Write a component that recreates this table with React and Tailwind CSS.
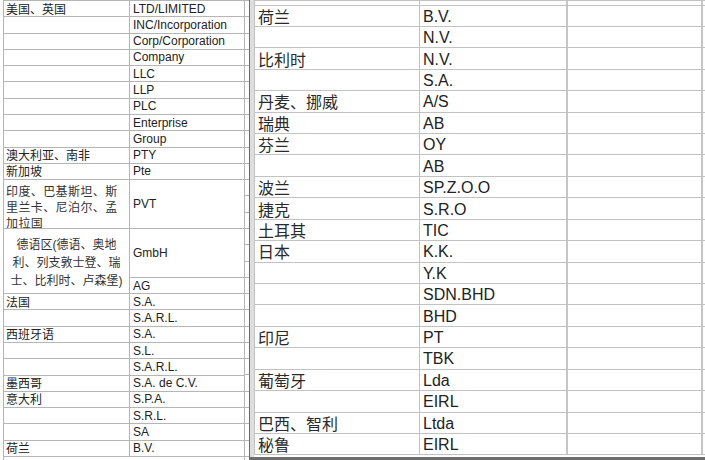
import React from "react";

const LEFT_TOP = [
  ["美国、英国", "LTD/LIMITED"],
  ["", "INC/Incorporation"],
  ["", "Corp/Corporation"],
  ["", "Company"],
  ["", "LLC"],
  ["", "LLP"],
  ["", "PLC"],
  ["", "Enterprise"],
  ["", "Group"],
  ["澳大利亚、南非", "PTY"],
  ["新加坡", "Pte"],
];

const LEFT_BOTTOM = [
  ["法国", "S.A."],
  ["", "S.A.R.L."],
  ["西班牙语", "S.A."],
  ["", "S.L."],
  ["", "S.A.R.L."],
  ["墨西哥", "S.A. de C.V."],
  ["意大利", "S.P.A."],
  ["", "S.R.L."],
  ["", "SA"],
  ["荷兰", "B.V."],
];

const RIGHT = [
  ["荷兰", "B.V."],
  ["", "N.V."],
  ["比利时", "N.V."],
  ["", "S.A."],
  ["丹麦、挪威", "A/S"],
  ["瑞典", "AB"],
  ["芬兰", "OY"],
  ["", "AB"],
  ["波兰", "SP.Z.O.O"],
  ["捷克", "S.R.O"],
  ["土耳其", "TIC"],
  ["日本", "K.K."],
  ["", "Y.K"],
  ["", "SDN.BHD"],
  ["", "BHD"],
  ["印尼", "PT"],
  ["", "TBK"],
  ["葡萄牙", "Lda"],
  ["", "EIRL"],
  ["巴西、智利", "Ltda"],
  ["秘鲁", "EIRL"],
];

function LRow({ a, b }) {
  return (
    <div className="h-[16.29px] flex border-b border-[#b5b5b5]">
      <div className="w-[126px] shrink-0 border-r border-[#b5b5b5] flex items-center pl-[2px] pt-[2px] text-[12px] leading-none whitespace-nowrap overflow-hidden">
        {a}
      </div>
      <div className="flex-1 flex items-center pl-[3px] text-[12px] leading-none whitespace-nowrap overflow-hidden">
        {b}
      </div>
    </div>
  );
}

function RRow({ a, b }) {
  return (
    <div className="h-[21.43px] flex border-b border-[#c2c2c2]">
      <div className="w-[166px] shrink-0 border-l border-r border-[#c2c2c2] flex items-center pl-[3px] pt-[4px] text-[16px] leading-none whitespace-nowrap text-[#2a2a2a]">
        {a}
      </div>
      <div className="w-[148px] shrink-0 border-r-2 border-[#c6c6c6] flex items-center pl-[3px] pt-[2px] text-[16px] leading-none whitespace-nowrap">
        {b}
      </div>
      <div className="w-[135px] shrink-0 border-r-2 border-[#c6c6c6]" />
      <div className="flex-1" />
    </div>
  );
}

export default function App() {
  const stubs = Array.from({ length: 28 });
  return (
    <div className="w-[705px] h-[460px] flex bg-white overflow-hidden text-[#222] font-['Liberation_Sans','Noto_Sans_CJK_SC',sans-serif]">
      {/* left sheet */}
      <div className="w-[249px] shrink-0 flex pl-[3px]">
        <div className="w-[242px] shrink-0 flex flex-col border-l border-r border-t border-[#b5b5b5]">
          {LEFT_TOP.map(([a, b], i) => (
            <LRow key={"t" + i} a={a} b={b} />
          ))}
          <div className="h-[48.87px] flex border-b border-[#b5b5b5]">
            <div className="w-[126px] shrink-0 border-r border-[#b5b5b5] pl-[2px] pt-[4px] text-[12px] leading-[16px] tracking-[0.4px] overflow-hidden text-[#333]">
              印度、巴基斯坦、斯
              <br />
              里兰卡、尼泊尔、孟
              <br />
              加拉国
            </div>
            <div className="flex-1 flex items-center pl-[3px] text-[12px] leading-none">PVT</div>
          </div>
          <div className="h-[65.16px] flex border-b border-[#b5b5b5]">
            <div className="w-[126px] shrink-0 border-r border-[#b5b5b5] flex items-center justify-center text-center pt-[4px] text-[12px] leading-[18px] text-[#333] whitespace-nowrap">
              <div>
                德语区(德语、奥地
                <br />
                利、列支敦士登、瑞
                <br />
                士、比利时、卢森堡)
              </div>
            </div>
            <div className="flex-1 flex flex-col">
              <div className="h-[48.87px] flex items-center pl-[3px] border-b border-[#b5b5b5] text-[12px] leading-none">
                GmbH
              </div>
              <div className="flex-1 flex items-center pl-[3px] pt-[2px] text-[12px] leading-none">AG</div>
            </div>
          </div>
          {LEFT_BOTTOM.map(([a, b], i) => (
            <LRow key={"b" + i} a={a} b={b} />
          ))}
        </div>
        <div className="w-[4px] shrink-0 flex flex-col border-t border-[#b5b5b5]">
          {stubs.map((_, i) => (
            <div key={i} className="h-[16.29px] shrink-0 border-b border-[#b5b5b5]" />
          ))}
        </div>
      </div>
      {/* divider */}
      <div className="w-[1px] shrink-0 bg-[#6b6b6b]" />
      {/* right sheet */}
      <div className="flex-1 flex flex-col">
        <div className="flex-1 flex">
          <div className="w-[4px] shrink-0 bg-[#dedede]" />
          <div className="flex-1 flex flex-col">
            <div className="h-[5.5px] flex border-t border-b border-[#c2c2c2]">
              <div className="w-[166px] shrink-0 border-l border-r border-[#c2c2c2]" />
              <div className="w-[148px] shrink-0 border-r-2 border-[#c6c6c6]" />
              <div className="w-[135px] shrink-0 border-r-2 border-[#c6c6c6]" />
            </div>
            {RIGHT.map(([a, b], i) => (
              <RRow key={i} a={a} b={b} />
            ))}
          </div>
        </div>
        <div className="h-[3px] bg-[#6e6e6e]" />
      </div>
    </div>
  );
}
